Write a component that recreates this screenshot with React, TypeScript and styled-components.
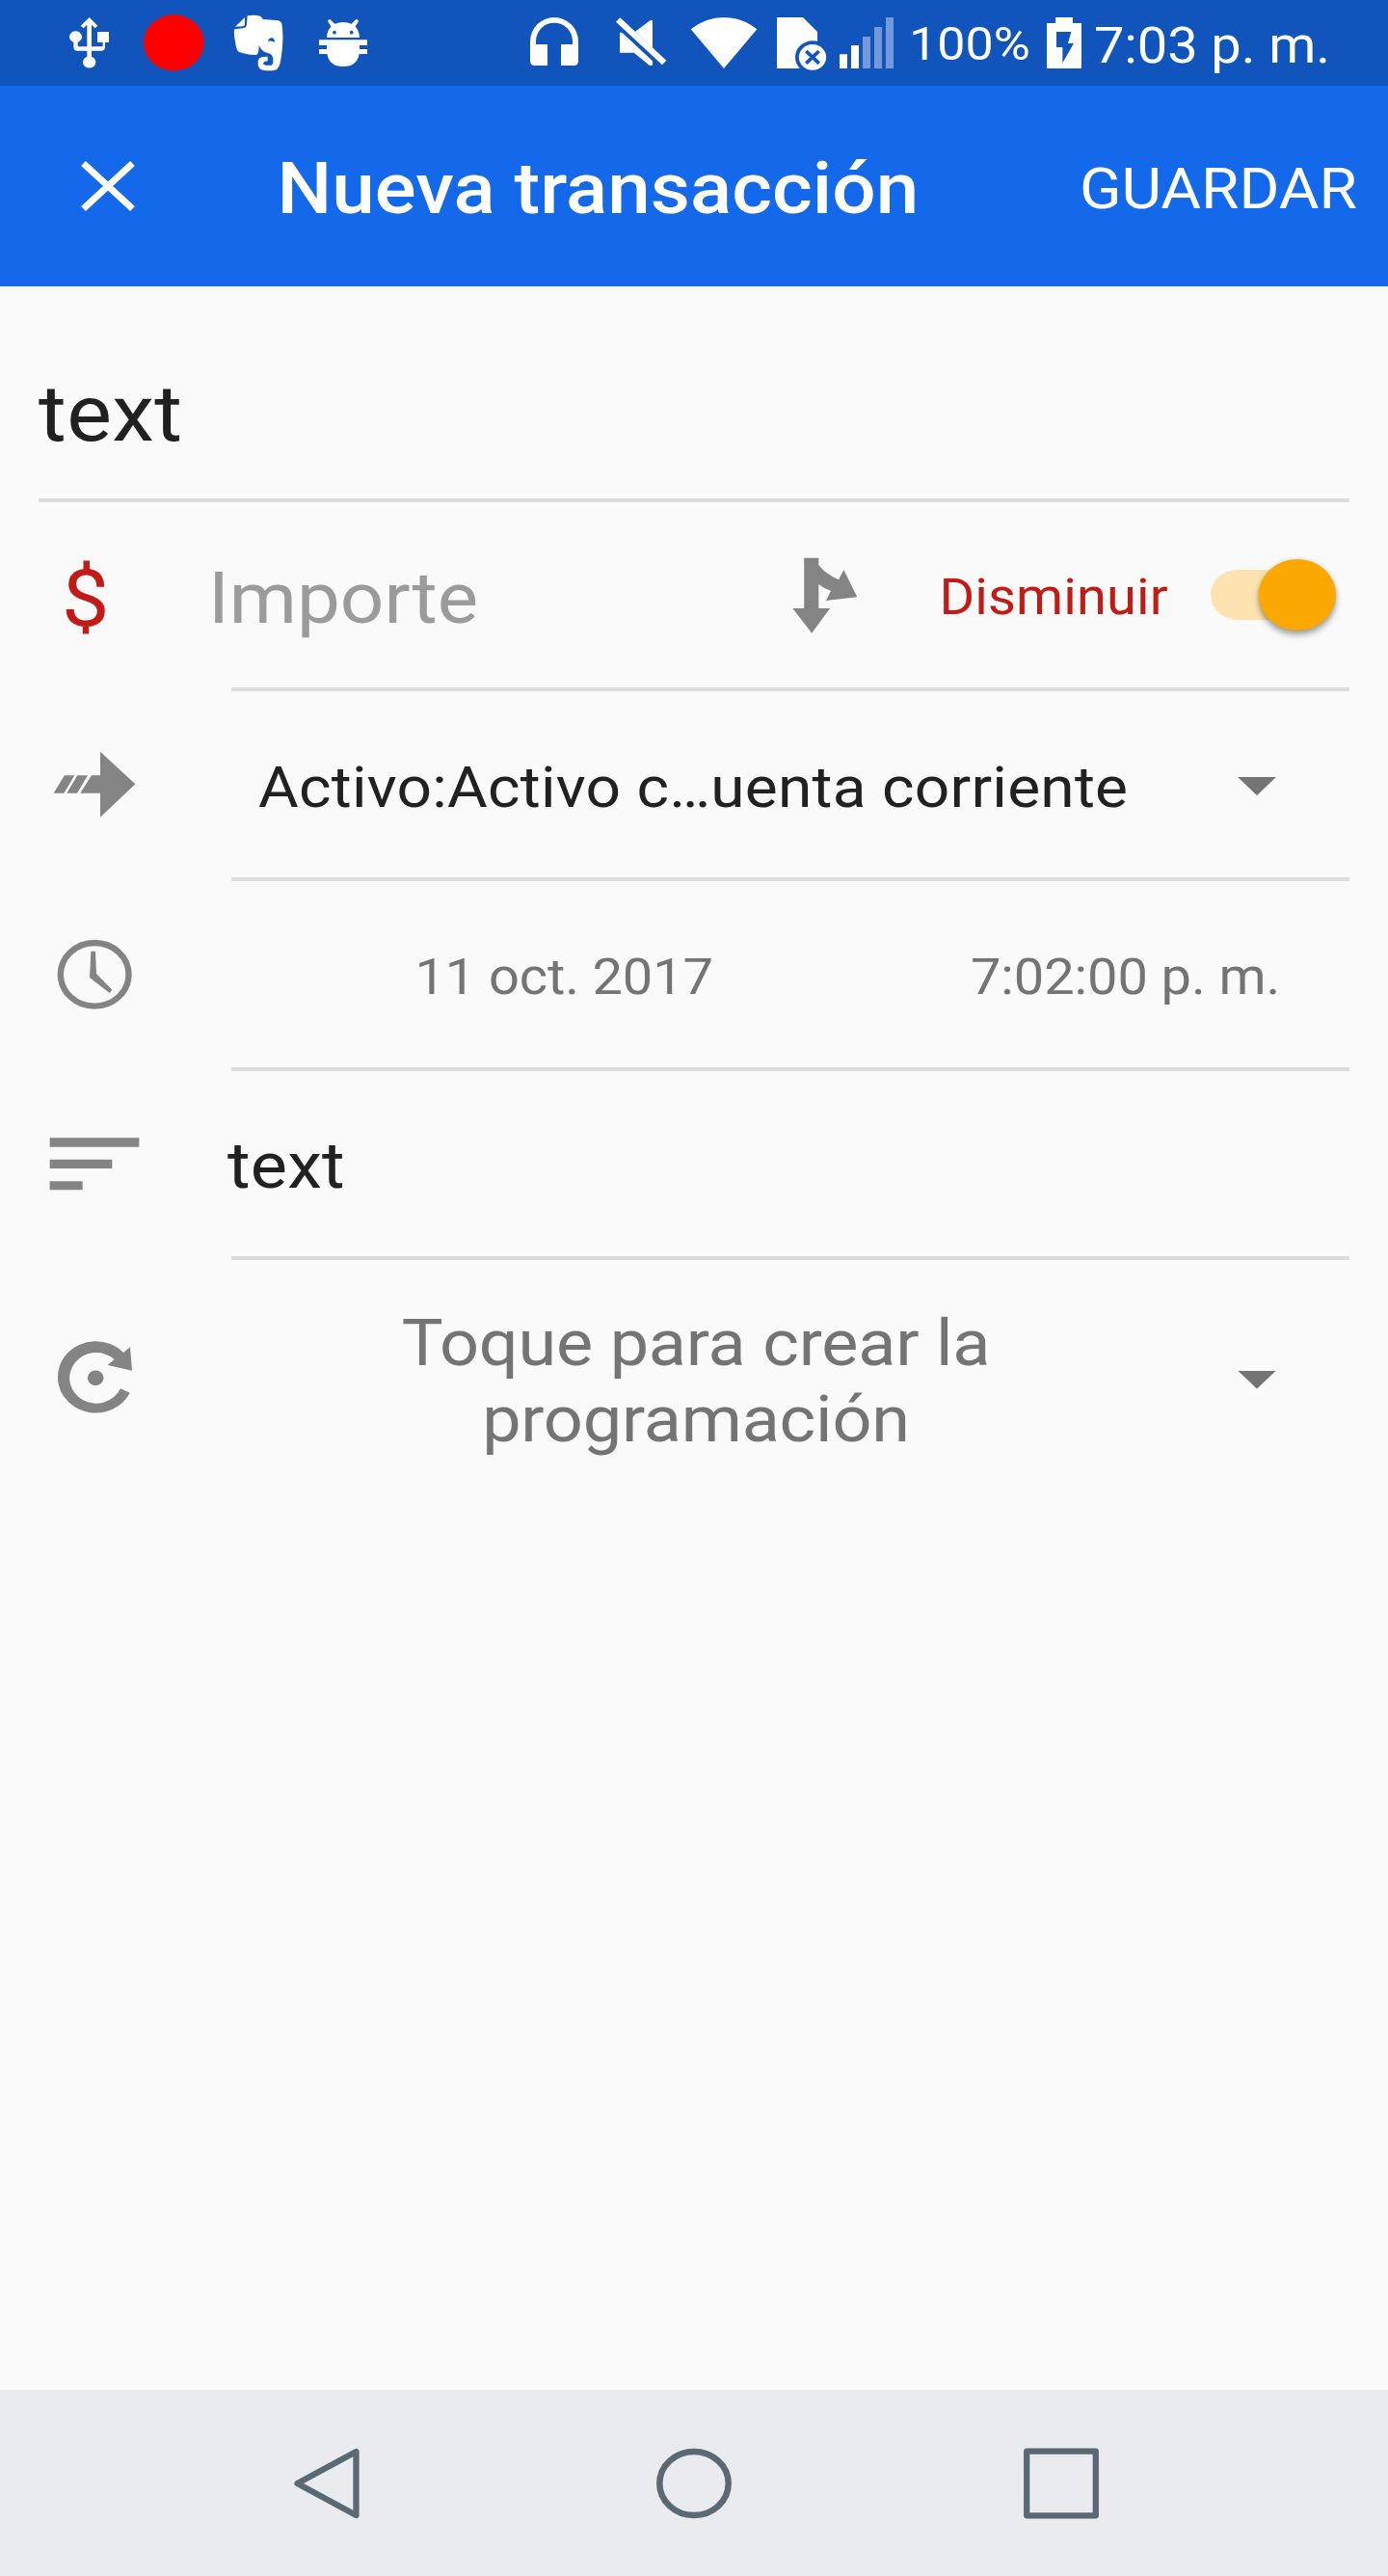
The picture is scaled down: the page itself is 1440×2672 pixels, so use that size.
import React from "react";
import styled, { createGlobalStyle } from "styled-components";

const color = {
  status: "#1155bc",
  primary: "#1469eb",
  surface: "#fafafa",
  divider: "#dcdcdc",
  text: "#212121",
  muted: "#747474",
  hint: "#9b9b9b",
  icon: "#848484",
  debit: "#c11b17",
  accent: "#fba900",
  accentSoft: "#fde3b0",
  nav: "#e9ebef",
  navIcon: "#5b6972",
};

const Global = createGlobalStyle`
  *, *::before, *::after { box-sizing: border-box; }
  html, body { margin: 0; padding: 0; background: ${color.surface}; }
  body { font-family: Roboto, "Noto Sans", sans-serif; }
  svg { display: block; flex: none; }
`;

const Screen = styled.div`
  width: 1440px;
  height: 2672px;
  display: flex;
  flex-direction: column;
  background: ${color.surface};
  overflow: hidden;
`;

const Label = styled.span<{ $size: number; $color?: string; $weight?: number; $line?: number; $drop?: number; $space?: number }>`
  display: block;
  flex: none;
  font-size: ${(p) => p.$size}px;
  line-height: ${(p) => p.$line ?? p.$size * 1.2}px;
  font-weight: ${(p) => p.$weight ?? 400};
  color: ${(p) => p.$color ?? color.text};
  letter-spacing: ${(p) => p.$space ?? 0}px;
  white-space: pre;
  margin-top: ${(p) => (p.$drop ?? 3) * 2}px;
  transform: scaleY(0.928);
`;

const StatusBar = styled.header`
  height: 89px;
  flex: none;
  display: flex;
  align-items: center;
  background: ${color.status};
`;

const AppBar = styled.div`
  height: 208px;
  flex: none;
  display: flex;
  align-items: center;
  padding-left: 80px;
  padding-right: 32px;
  background: ${color.primary};
`;

const Title = styled.h1`
  margin: 0 auto 0 143.5px;
  font-weight: 500;
`;

const PlainButton = styled.button`
  display: block;
  flex: none;
  padding: 0;
  border: 0;
  background: none;
  font: inherit;
  text-align: left;
`;

const Form = styled.main`
  flex: 1;
  display: flex;
  flex-direction: column;
`;

const Row = styled.div<{ $height: number }>`
  height: ${(p) => p.$height}px;
  flex: none;
  display: flex;
  align-items: center;
`;

const DescriptionRow = styled(Row)`
  padding: 43px 40px 0;
`;

const Divider = styled.hr<{ $inset?: boolean }>`
  width: auto;
  height: 4px;
  flex: none;
  margin: 0 40px 0 ${(p) => (p.$inset ? 240 : 40)}px;
  border: 0;
  background: ${color.divider};
`;

const Leading = styled.div<{ $left: number; $width: number }>`
  width: ${(p) => p.$width}px;
  padding-left: ${(p) => p.$left}px;
  flex: none;
  display: flex;
  align-items: center;
`;

const Slot = styled.div<{ $width: number }>`
  width: ${(p) => p.$width}px;
  flex: none;
  display: flex;
`;

const CenterSlot = styled(Slot)`
  justify-content: center;
  text-align: center;
  margin-right: 80px;
`;

const Clock = styled.div`
  margin-left: 13px;
`;

const Caret = styled.span<{ $drop?: number }>`
  width: 40px;
  height: 19px;
  flex: none;
  margin-top: ${(p) => p.$drop ?? 4}px;
  background: #747474;
  clip-path: polygon(0 0, 100% 0, 50% 100%);
`;

const Switch = styled.div`
  position: relative;
  width: 130px;
  height: 74px;
  flex: none;
  display: flex;
  align-items: center;
`;

const Track = styled.span`
  width: 104px;
  height: 52px;
  border-radius: 28px / 26px;
  background: ${color.accentSoft};
`;

const Thumb = styled.span`
  position: absolute;
  right: 0;
  top: 0;
  width: 80px;
  height: 74px;
  border-radius: 50%;
  background: ${color.accent};
  box-shadow: 0 5px 6px rgba(0, 0, 0, 0.32), 0 0 5px rgba(0, 0, 0, 0.14);
`;

const NavBar = styled.nav`
  height: 193px;
  flex: none;
  display: flex;
  align-items: center;
  padding-left: 304px;
  background: ${color.nav};
`;

const NavButton = styled(PlainButton)<{ $gap?: number }>`
  margin-left: ${(p) => p.$gap ?? 0}px;
`;

const StatusGlyph = styled.svg<{ $gap: number }>`
  height: 89px;
  margin-left: ${(p) => p.$gap}px;
`;

function Glyph({ x, w, gap, children }: { x: number; w: number; gap: number; children: React.ReactNode }) {
  return (
    <StatusGlyph $gap={gap} width={w / 3} viewBox={`${x} 0 ${w} 267`} fill="#fff">
      {children}
    </StatusGlyph>
  );
}

function StatusIcons() {
  return (
    <>
      <Glyph x={66} w={123} gap={72}>
        <path d="M128 54 154 80 146 88 135 77V145H168Q170 145 170 142V132H153V99H189V132H177V145Q177 158 167 158H135V176A20 18.5 0 1 1 121 176V158H91Q79 158 79 146V132A19.500 18 0 1 1 92 132V142Q92 145 95 145H121V77L110 88 101 80Z" />
      </Glyph>
      <Glyph x={297} w={189} gap={36}>
        <ellipse cx="391" cy="133" rx="94" ry="87.500" fill="#f00" />
      </Glyph>
      <Glyph x={576} w={159} gap={30}>
        <path d="M620 49Q640 45 660 50 667 54 668 60L716 64Q727 67 728 80 734 130 724 185 720 214 706 218 692 221 672 219 655 217 653 202V190Q655 178 668 177L683 176V190L674 191Q668 194 670 200 674 204 695 203 701 200 700 188 700 171 690 167 664 163 656 141 656 166 648 171 615 170 592 161 585 154 582 130 576 100 580 91L605 88Q618 86 618 76Z" />
        <path d="M582 83 612 54V75Q612 81 606 82Z" />
        <path d="M684 128Q687 117 697 118 705 121 705 131 694 126 684 128Z" fill={color.status} />
      </Glyph>
      <Glyph x={843} w={150} gap={36}>
        <path d="M867 117Q868 90 886 78L871 65Q871 60 878 62L892 74Q918 64 944 74L956 62Q965 60 965 66L951 78Q968 91 969 117Z" />
        <path d="M876 66 886 82M960 66 950 82" stroke="#fff" strokeWidth="10" strokeLinecap="round" />
        <path d="M843 124H993V141H969V153H993V168H968Q961 207 918 207 875 207 868 168H843V153H867V141H843Z" />
        <circle cx="891" cy="101" r="5.500" fill={color.status} />
        <circle cx="944" cy="101" r="5.500" fill={color.status} />
      </Glyph>
      <Glyph x={60} w={150} gap={169}>
        <path d="M60 129A75 75 0 0 1 210 129V188Q210 204 196 204H156V138H192V128A57 57 0 0 0 78 128V138H114V204H74Q60 204 60 188Z" />
      </Glyph>
      <Glyph x={327} w={159} gap={39}>
        <path d="M340 55 484 188 471 202 327 68Z" />
        <path d="M387 98 434 63H441V150Z" />
        <path d="M339 101H346L441 190V204H432L383 164H339Z" />
      </Glyph>
      <Glyph x={558} w={210} gap={24}>
        <path d="M560 91Q607 54 663 54 719 54 766 91L663 213Z" />
      </Glyph>
      <Glyph x={828} w={156} gap={20}>
        <path d="M828 54H909L954 99V213H828Z" />
        <ellipse cx="939" cy="178" rx="54" ry="51" fill={color.status} />
        <ellipse cx="939" cy="178" rx="42.500" ry="40" />
        <path d="M919 159 959 197M959 159 919 197" stroke={color.status} strokeWidth="11" />
      </Glyph>
      <Glyph x={1023} w={168} gap={13}>
        <path d="M1023 169H1047V213H1023ZM1059 141H1083V213H1059Z" />
        <path d="M1095 114H1119V213H1095ZM1131 84H1155V213H1131ZM1167 54H1191V213H1167Z" fill="#7399d8" />
      </Glyph>
    </>
  );
}

const BatteryGroup = styled.div`
  display: flex;
  align-items: center;
  margin-left: 16px;
`;

function Battery() {
  return (
    <Glyph x={468} w={108} gap={0}>
      <path d="M468 72H495V54H549V72H576V213H468Z" />
      <path d="M498 99H544L534 135H552L517 196V147H498Z" fill={color.status} />
    </Glyph>
  );
}

const CloseIcon = () => (
  <svg width="64" height="56" viewBox="80 165 64 56">
    <path d="M86.500 169.500 137.500 216.500M137.500 169.500 86.500 216.500" stroke="#fff" strokeWidth="7" />
  </svg>
);

const SplitIcon = () => (
  <svg width="69" height="79" viewBox="100 112 164 237" preserveAspectRatio="none">
    <path
      fill={color.icon}
      d="M129 114H165V137Q185 167 214 182L227 152 260 236 183 247 195 217Q177 208 165 196V271H193L148 348 101 271H129Z"
    />
  </svg>
);

const TransferIcon = () => (
  <svg width="86" height="69" viewBox="165 117 258 207" fill={color.icon}>
    <path d="M312 119 421 220 312 323V248H250L285 193H312Z" />
    <path d="M201 193H232L199 248H167ZM241 193H273L240 248H208Z" />
  </svg>
);

const ClockIcon = () => (
  <svg width="78" height="74" viewBox="177 700 234 222">
    <ellipse cx="294.500" cy="810.500" rx="106" ry="98.500" fill="none" stroke={color.icon} strokeWidth="19" />
    <path d="M283 738H297L300 808 349 858 341 868 279 820Z" fill={color.icon} />
  </svg>
);

const NotesIcon = () => (
  <svg width="94" height="55" viewBox="153 149 282 165">
    <path fill={color.icon} d="M155 150H433V178H155ZM155 217H349V245H155ZM155 285H257V312H155Z" />
  </svg>
);

const RecurrenceIcon = () => (
  <svg width="79" height="76" viewBox="176 782 237 228" fill={color.icon}>
    <path d="M383 818 404 801 410 874 334 857 355 839A83 79 0 1 0 374 930L403 943A118 111.500 0 1 1 383 818Z" />
    <ellipse cx="296.500" cy="897" rx="25" ry="23.500" />
  </svg>
);

const BackIcon = () => (
  <svg width="70" height="74" viewBox="304 2538.500 70 74" fill="none" stroke={color.navIcon} strokeWidth="6.300" strokeLinejoin="round">
    <path d="M369.500 2542.500V2608.500L308.500 2575.500Z" />
  </svg>
);

const HomeIcon = () => (
  <svg width="78" height="74" viewBox="0 0 78 74" fill="none" stroke={color.navIcon} strokeWidth="6.500">
    <ellipse cx="39" cy="37" rx="35.700" ry="33" />
  </svg>
);

const RecentsIcon = () => (
  <svg width="78" height="74" viewBox="0 0 78 74" fill="none" stroke={color.navIcon} strokeWidth="6.300" strokeLinejoin="round">
    <rect x="3.200" y="3.700" width="71.600" height="66.600" />
  </svg>
);

export default function App() {
  return (
    <>
      <Global />
      <Screen>
        <StatusBar>
          <StatusIcons />
          <BatteryGroup>
            <Slot $width={143}>
              <Label $size={52} $color="#fff" $drop={2}>100%</Label>
            </Slot>
            <Battery />
          </BatteryGroup>
          <Clock>
            <Label $size={56} $color="#fff" $space={-0.1}>7:03 p. m.</Label>
          </Clock>
        </StatusBar>

        <AppBar>
          <PlainButton aria-label="Cerrar">
            <CloseIcon />
          </PlainButton>
          <Title>
            <Label $size={80} $color="#fff" $weight={500} $space={0.05}>Nueva transacción</Label>
          </Title>
          <PlainButton>
            <Label $size={64} $color="#fff">GUARDAR</Label>
          </PlainButton>
        </AppBar>

        <Form>
          <DescriptionRow $height={220}>
            <Label $size={88} $drop={0} $space={0.4}>text</Label>
          </DescriptionRow>
          <Divider />

          <Row $height={192}>
            <Leading $left={64} $width={216}>
              <Label $size={88} $color={color.debit} $drop={3.5}>$</Label>
            </Leading>
            <Slot $width={606}>
              <Label $size={80} $color={color.hint} $drop={3.5}>Importe</Label>
            </Slot>
            <Slot $width={152.5}>
              <SplitIcon />
            </Slot>
            <Slot $width={281.5}>
              <Label $size={56} $color={color.debit} $space={0.1}>Disminuir</Label>
            </Slot>
            <Switch role="switch" aria-checked="true">
              <Track />
              <Thumb />
            </Switch>
          </Row>
          <Divider $inset />

          <Row $height={193}>
            <Leading $left={55} $width={268}>
              <TransferIcon />
            </Leading>
            <Slot $width={1016}>
              <Label $size={64} $drop={3.5} $space={0.25}>Activo:Activo c…uenta corriente</Label>
            </Slot>
            <Caret />
          </Row>
          <Divider $inset />

          <Row $height={193}>
            <Leading $left={59} $width={430.5}>
              <ClockIcon />
            </Leading>
            <Slot $width={576.5}>
              <Label $size={56} $color={color.muted} $space={-0.13}>11 oct. 2017</Label>
            </Slot>
            <Label $size={56} $color={color.muted} $space={-0.1}>7:02:00 p. m.</Label>
          </Row>
          <Divider $inset />

          <Row $height={192}>
            <Leading $left={51} $width={236}>
              <NotesIcon />
            </Leading>
            <Label $size={72} $drop={3.5} $space={0.2}>text</Label>
          </Row>
          <Divider $inset />

          <Row $height={244}>
            <Leading $left={59} $width={240}>
              <RecurrenceIcon />
            </Leading>
            <CenterSlot $width={964}>
              <Label $size={72} $line={85} $color={color.muted} $drop={3.5} $space={-0.2}>
                {"Toque para crear la\nprogramación"}
              </Label>
            </CenterSlot>
            <Caret />
          </Row>
        </Form>

        <NavBar>
          <NavButton aria-label="Atrás">
            <BackIcon />
          </NavButton>
          <NavButton $gap={307} aria-label="Inicio">
            <HomeIcon />
          </NavButton>
          <NavButton $gap={303} aria-label="Recientes">
            <RecentsIcon />
          </NavButton>
        </NavBar>
      </Screen>
    </>
  );
}
